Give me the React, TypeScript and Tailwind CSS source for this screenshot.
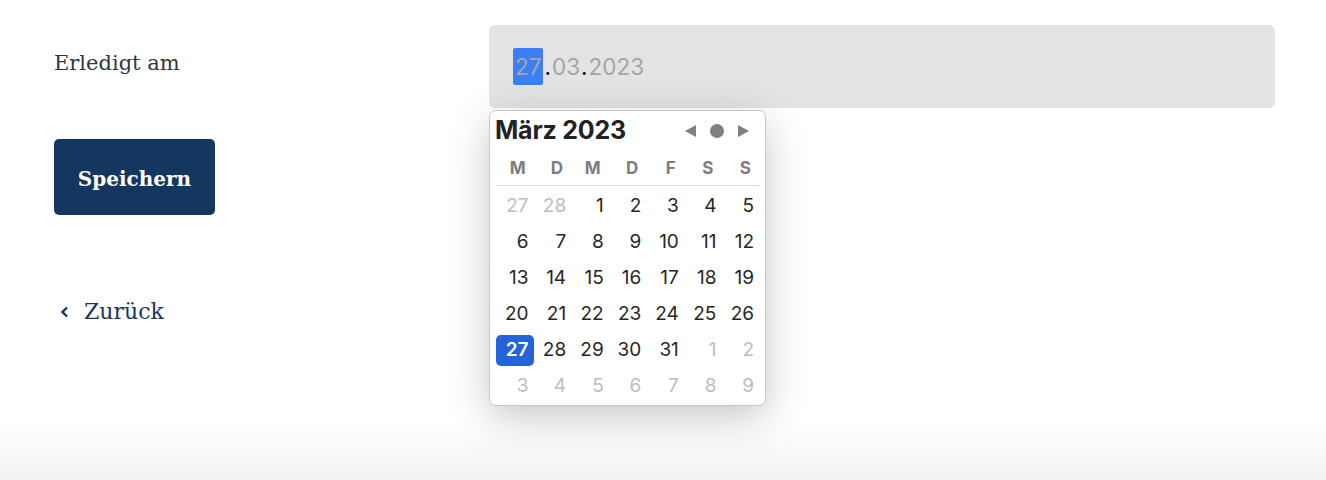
const weekdays = ["M", "D", "M", "D", "F", "S", "S"];

type Day = { n: number; muted?: boolean; selected?: boolean };

const days: Day[] = [
  { n: 27, muted: true },
  { n: 28, muted: true },
  ...Array.from({ length: 31 }, (_, i) => ({ n: i + 1, selected: i + 1 === 27 })),
  { n: 1, muted: true },
  { n: 2, muted: true },
  ...Array.from({ length: 7 }, (_, i) => ({ n: i + 3, muted: true })),
];

function DatePopup() {
  return (
    <div className="absolute left-0 top-[85px] z-10 w-[277px] rounded-[7px] border border-[#c6c6c6] bg-white pb-px shadow-[0_12px_40px_rgba(0,0,0,0.22)] font-['Inter',sans-serif]">
      <div className="flex h-[39px] items-center justify-between px-[5px]">
        <span className="text-[25px] font-bold tracking-[-0.2px] text-[#222]">März 2023</span>
        <div className="flex items-center gap-[14px] pr-[11px] text-[#808080]">
          <svg width="11" height="12" viewBox="0 0 11 12">
            <path d="M0 6 L11 0 L11 12 Z" fill="currentColor" />
          </svg>
          <svg width="14" height="14" viewBox="0 0 14 14">
            <circle cx="7" cy="7" r="7" fill="currentColor" />
          </svg>
          <svg width="11" height="12" viewBox="0 0 11 12">
            <path d="M11 6 L0 0 L0 12 Z" fill="currentColor" />
          </svg>
        </div>
      </div>
      <div className="grid h-[35px] grid-cols-7 items-center px-[6px] pt-[3px]">
        {weekdays.map((d, i) => (
          <span key={i} className="pr-[8px] text-right text-[17px] font-bold text-[#7d7d7d]">
            {d}
          </span>
        ))}
      </div>
      <div className="mx-[6px] h-px bg-[#dedede]" />
      <div className="mt-[2px] grid grid-cols-7 px-[6px]">
        {days.map((d, i) => (
          <div key={i} className="flex h-[36px] items-center">
            <span
              className={
                d.selected
                  ? "flex h-[31px] w-full items-center justify-end rounded-[5px] bg-[#2563d9] pr-[5px] text-[19px] font-semibold text-white"
                  : d.muted
                    ? "w-full pr-[5px] text-right text-[19px] text-[#bdbdbd]"
                    : "w-full pr-[5px] text-right text-[19px] text-[#262626]"
              }
            >
              {d.n}
            </span>
          </div>
        ))}
      </div>
    </div>
  );
}

export default function App() {
  return (
    <div className="relative h-[480px] overflow-hidden bg-white">
      <main className="pl-[54px] pr-[51px] pt-[25px]">
        <div className="flex">
          <label className="w-[435px] pt-[23px] font-['DejaVu_Serif',serif] text-[21px] text-[#2f3742]">
            Erledigt am
          </label>
          <div className="relative flex-1">
            <div className="flex h-[83px] items-center rounded-[6px] bg-[#e3e3e3] pl-[24px] font-['Inter',sans-serif] text-[22.5px] text-[#a5a5a5]">
              <span className="rounded-[2px] bg-[#3a7ff6] px-[2px] py-[2px]">27</span>
              <span className="px-px text-black">.</span>
              <span>03</span>
              <span className="px-px text-black">.</span>
              <span>2023</span>
            </div>
            <DatePopup />
          </div>
        </div>

        <button className="mt-[31px] h-[76px] w-[161px] rounded-[5px] bg-[#14375f] pt-[4px] font-['DejaVu_Serif',serif] text-[20px] font-bold text-white">
          Speichern
        </button>

        <a className="mt-[80px] flex items-center gap-[15px] pl-[6px] font-['DejaVu_Serif',serif] text-[22px] text-[#17375f]">
          <svg width="9" height="12" viewBox="0 0 9 12" fill="none">
            <path d="M7 1.5 L2.5 6 L7 10.5" stroke="currentColor" strokeWidth="2.4" />
          </svg>
          Zurück
        </a>
      </main>
      <div className="absolute inset-x-0 bottom-0 h-[55px] bg-gradient-to-b from-white to-[#f2f2f2]" />
    </div>
  );
}
